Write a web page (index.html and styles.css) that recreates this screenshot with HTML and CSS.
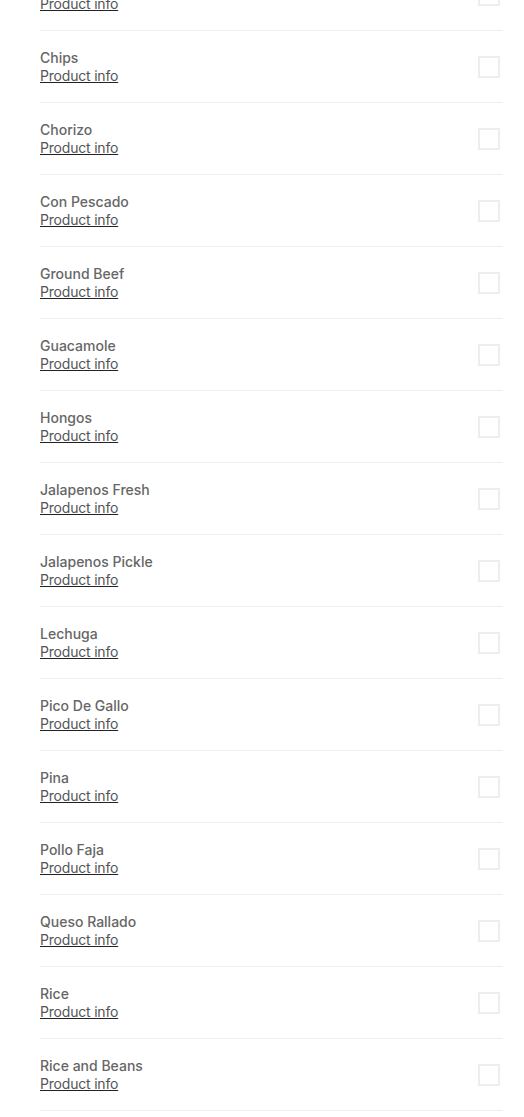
FILE: index.html
```html
<!DOCTYPE html>
<html>
<head>
<meta charset="utf-8">
<link rel="stylesheet" href="styles.css">
</head>
<body>
<ul class="list">
  <li class="row"><div class="info"><span class="name">Cebolla</span><a class="link" href="#">Product info</a></div><span class="check"></span></li>
  <li class="row"><div class="info"><span class="name">Chips</span><a class="link" href="#">Product info</a></div><span class="check"></span></li>
  <li class="row"><div class="info"><span class="name">Chorizo</span><a class="link" href="#">Product info</a></div><span class="check"></span></li>
  <li class="row"><div class="info"><span class="name">Con Pescado</span><a class="link" href="#">Product info</a></div><span class="check"></span></li>
  <li class="row"><div class="info"><span class="name">Ground Beef</span><a class="link" href="#">Product info</a></div><span class="check"></span></li>
  <li class="row"><div class="info"><span class="name">Guacamole</span><a class="link" href="#">Product info</a></div><span class="check"></span></li>
  <li class="row"><div class="info"><span class="name">Hongos</span><a class="link" href="#">Product info</a></div><span class="check"></span></li>
  <li class="row"><div class="info"><span class="name">Jalapenos Fresh</span><a class="link" href="#">Product info</a></div><span class="check"></span></li>
  <li class="row"><div class="info"><span class="name">Jalapenos Pickle</span><a class="link" href="#">Product info</a></div><span class="check"></span></li>
  <li class="row"><div class="info"><span class="name">Lechuga</span><a class="link" href="#">Product info</a></div><span class="check"></span></li>
  <li class="row"><div class="info"><span class="name">Pico De Gallo</span><a class="link" href="#">Product info</a></div><span class="check"></span></li>
  <li class="row"><div class="info"><span class="name">Pina</span><a class="link" href="#">Product info</a></div><span class="check"></span></li>
  <li class="row"><div class="info"><span class="name">Pollo Faja</span><a class="link" href="#">Product info</a></div><span class="check"></span></li>
  <li class="row"><div class="info"><span class="name">Queso Rallado</span><a class="link" href="#">Product info</a></div><span class="check"></span></li>
  <li class="row"><div class="info"><span class="name">Rice</span><a class="link" href="#">Product info</a></div><span class="check"></span></li>
  <li class="row"><div class="info"><span class="name">Rice and Beans</span><a class="link" href="#">Product info</a></div><span class="check"></span></li>
</ul>
</body>
</html>
```
FILE: styles.css
```css
html, body {
  margin: 0;
  padding: 0;
  background: #fff;
}
body {
  font-family: Inter, "Liberation Sans", sans-serif;
  font-size: 14px;
  overflow: hidden;
}
.list {
  list-style: none;
  margin: -41px 0 0 40px;
  padding: 0;
  width: 463px;
}
.row {
  display: flex;
  align-items: center;
  justify-content: space-between;
  height: 71px;
  border-bottom: 1px solid #eeeeee;
}
.info {
  display: flex;
  flex-direction: column;
  line-height: 18px;
}
.name {
  color: #666;
  font-weight: 500;
}
.link {
  color: #555;
  letter-spacing: -0.2px;
  text-decoration: underline;
  text-decoration-color: #222;
}
.check {
  width: 18px;
  height: 18px;
  border: 2px solid #eeeeee;
  margin-right: 3px;
}
```
